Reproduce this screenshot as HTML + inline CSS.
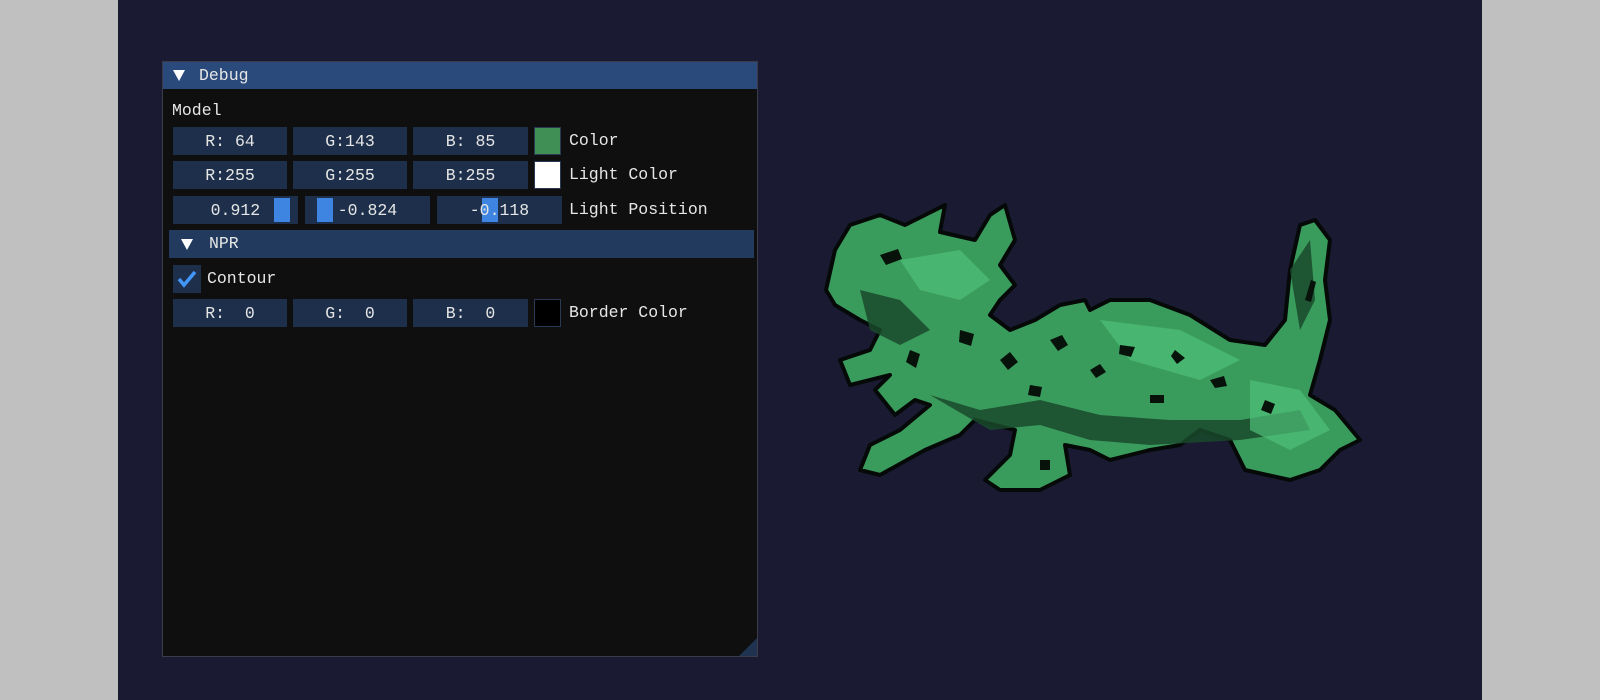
<!DOCTYPE html>
<html><head><meta charset="utf-8"><style>
html,body{margin:0;padding:0;width:1600px;height:700px;overflow:hidden;background:#c0c0c0;}
#bg{position:absolute;left:118px;top:0;width:1364px;height:700px;background:#1a1a32;}
.win{position:absolute;left:162px;top:61px;width:596px;height:596px;background:#0f0f0f;border:1px solid #3b3b4a;box-sizing:border-box;}
.t{position:absolute;font-family:"Liberation Mono",monospace;font-size:16.5px;color:#e6e6e6;white-space:pre;line-height:18px;}
.title{position:absolute;left:0;top:0;width:594px;height:27px;background:#294a7a;}
.f{position:absolute;background:#1d2f4a;height:28px;}
.f span{position:absolute;left:0;right:0;top:5px;text-align:center;font-family:"Liberation Mono",monospace;font-size:16.5px;color:#e6e6e6;white-space:pre;}
.g{position:absolute;background:#3d85e0;width:16px;height:24px;top:2px;}
.sw{position:absolute;width:27px;height:28px;box-sizing:border-box;border:1px solid #2a3a55;}
.tri{position:absolute;width:0;height:0;border-left:6px solid transparent;border-right:6px solid transparent;border-top:11px solid #fff;}
</style></head><body>
<div id="bg"></div>
<div class="win">
 <div class="title"><div class="tri" style="left:10px;top:8px"></div><div class="t" style="left:36px;top:5px">Debug</div></div>
 <div class="t" style="left:9px;top:40px">Model</div>
 <div class="f" style="left:10px;top:65px;width:114px"><span>R: 64</span></div>
 <div class="f" style="left:130px;top:65px;width:114px"><span>G:143</span></div>
 <div class="f" style="left:250px;top:65px;width:115px"><span>B: 85</span></div>
 <div class="sw" style="left:371px;top:65px;background:#408f55"></div>
 <div class="t" style="left:406px;top:70px">Color</div>
 <div class="f" style="left:10px;top:99px;width:114px"><span>R:255</span></div>
 <div class="f" style="left:130px;top:99px;width:114px"><span>G:255</span></div>
 <div class="f" style="left:250px;top:99px;width:115px"><span>B:255</span></div>
 <div class="sw" style="left:371px;top:99px;background:#fff"></div>
 <div class="t" style="left:406px;top:104px">Light Color</div>
 <div class="f" style="left:10px;top:134px;width:125px"><div class="g" style="left:101px"></div><span style="right:20px">  0.912</span></div>
 <div class="f" style="left:142px;top:134px;width:125px"><div class="g" style="left:12px"></div><span>-0.824</span></div>
 <div class="f" style="left:274px;top:134px;width:125px"><div class="g" style="left:45px"></div><span>-0.118</span></div>
 <div class="t" style="left:406px;top:139px">Light Position</div>
 <div class="title" style="left:6px;top:168px;width:585px;height:28px;background:#213a5e"><div class="tri" style="left:12px;top:9px"></div><div class="t" style="left:40px;top:5px">NPR</div></div>
 <div class="f" style="left:10px;top:203px;width:28px;height:28px"><svg width="28" height="28" style="position:absolute;left:0;top:0"><path d="M6 14 L11 20 L22 7" stroke="#4296fa" stroke-width="3.5" fill="none"/></svg></div>
 <div class="t" style="left:44px;top:208px">Contour</div>
 <div class="f" style="left:10px;top:237px;width:114px"><span>R:  0</span></div>
 <div class="f" style="left:130px;top:237px;width:114px"><span>G:  0</span></div>
 <div class="f" style="left:250px;top:237px;width:115px"><span>B:  0</span></div>
 <div class="sw" style="left:371px;top:237px;background:#000"></div>
 <div class="t" style="left:406px;top:242px">Border Color</div>
 <div style="position:absolute;right:0;bottom:0;width:0;height:0;border-left:18px solid transparent;border-bottom:18px solid #1f3350"></div>
</div>
<svg width="1600" height="700" style="position:absolute;left:0;top:0">
<g stroke="#050a08" stroke-width="4" stroke-linejoin="round" fill="#3a9c5c">
<path d="M826 290 L835 250 L850 225 L880 215 L905 225 L945 205 L940 232 L975 240 L990 215 L1005 205 L1015 240 L1000 265 L1015 285 L1000 300 L990 315 L1010 330 L1035 320 L1060 305 L1085 300 L1090 310 L1110 300 L1150 300 L1190 315 L1230 340 L1265 345 L1285 320 L1290 270 L1300 225 L1315 220 L1330 240 L1325 280 L1330 320 L1320 360 L1310 395 L1335 410 L1360 440 L1340 450 L1320 470 L1290 480 L1245 470 L1230 440 L1200 430 L1180 445 L1150 450 L1110 460 L1090 450 L1065 445 L1070 475 L1040 490 L1000 490 L985 480 L1010 455 L1015 430 L975 420 L960 435 L925 450 L880 475 L860 470 L870 445 L900 430 L930 405 L915 400 L895 415 L875 390 L890 375 L850 385 L840 360 L870 350 L880 330 L860 320 L835 305 Z"/>
</g>
<g fill="#1a4a2c" opacity="0.85">
<path d="M930 395 L980 410 L1040 400 L1100 415 L1170 420 L1240 420 L1300 410 L1310 430 L1240 440 L1150 445 L1090 440 L1040 425 L990 430 Z"/>
<path d="M860 290 L900 300 L930 330 L900 345 L870 330 Z"/>
<path d="M1290 270 L1310 240 L1315 300 L1300 330 Z"/>
</g>
<g fill="#4fc079" opacity="0.7">
<path d="M900 260 L960 250 L990 280 L960 300 L920 290 Z"/>
<path d="M1100 320 L1180 330 L1240 360 L1200 380 L1130 360 Z"/>
<path d="M1250 380 L1300 390 L1330 430 L1290 450 L1250 430 Z"/>
</g>
<g fill="#06120a">
<path d="M1050 340 l12 -5 l6 10 l-10 6 z"/><path d="M1120 345 l15 2 l-4 10 l-12 -3 z"/>
<path d="M1175 350 l10 8 l-8 6 l-6 -8 z"/><path d="M1210 380 l14 -4 l3 10 l-12 2 z"/>
<path d="M1000 360 l10 -8 l8 10 l-10 8 z"/><path d="M960 330 l14 4 l-3 12 l-12 -4 z"/>
<path d="M1030 385 l12 2 l-2 10 l-12 -2 z"/><path d="M1090 370 l10 -6 l6 8 l-10 6 z"/>
<path d="M1150 395 l14 0 l0 8 l-14 0 z"/><path d="M1265 400 l10 4 l-4 10 l-10 -4 z"/>
<path d="M910 350 l10 4 l-4 14 l-10 -6 z"/><path d="M880 255 l18 -6 l4 10 l-16 6 z"/>
<path d="M1305 300 l6 -20 l5 2 l-5 20 z"/><path d="M1040 460 l10 0 l0 10 l-10 0 z"/>
</g>
</svg>
</body></html>
